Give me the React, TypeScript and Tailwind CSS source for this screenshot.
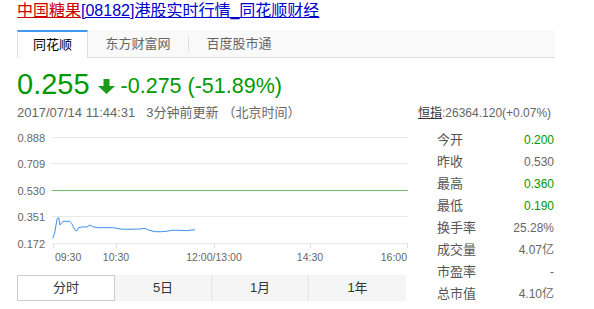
import React from "react";

const font = { fontFamily: '"Liberation Sans", Arial, "Noto Sans CJK SC", sans-serif' };

// price line, page coords (chart svg sits at left 17, top 124)
const pts: [number, number][] = [
  [52.7, 238.3], [54.7, 233], [56, 225], [57.3, 218.3], [58.7, 217.7], [60, 225], [62, 222.3],
  [64, 221], [66.7, 221.7], [69.3, 221], [71.7, 223.3], [73.3, 226.7], [75, 230], [76.7, 231],
  [78.3, 227.7], [81.7, 227], [86.7, 227], [90, 225], [92.7, 226.7], [98.3, 227.7],
  [106.7, 227.7], [113.3, 227.7], [120, 229], [126.7, 229.3], [140, 229], [145, 228.3],
  [148.3, 230], [155, 231.7], [161.7, 231.7], [168.3, 231], [171.7, 230.3], [180, 230.3],
  [186.7, 230.7], [191.7, 230], [195, 229.7],
];

const stats = [
  { k: "今开", v: "0.200", green: true },
  { k: "昨收", v: "0.530" },
  { k: "最高", v: "0.360", green: true },
  { k: "最低", v: "0.190", green: true },
  { k: "换手率", v: "25.28%" },
  { k: "成交量", v: "4.07亿" },
  { k: "市盈率", v: "-" },
  { k: "总市值", v: "4.10亿" },
];

const Chart = () => {
  const yl = [
    { t: "0.888", y: 13.5 },
    { t: "0.709", y: 39.5 },
    { t: "0.530", y: 66.5 },
    { t: "0.351", y: 92.5 },
    { t: "0.172", y: 119.5 },
  ];
  const ticks = [36, 99, 197, 293, 390];
  return (
    <svg width="393" height="146" className="block" style={font}>
      {yl.map((l, i) => (
        <g key={l.t}>
          <line
            x1="35"
            x2="391"
            y1={l.y}
            y2={l.y}
            stroke={i === 2 ? "#6dbb6d" : "#e8e8e8"}
            strokeWidth="1"
            shapeRendering="crispEdges"
          />
          <text x="28" y={l.y + 4} textAnchor="end" fontSize="11" fill="#666">
            {l.t}
          </text>
        </g>
      ))}
      {ticks.map((x) => (
        <line key={x} x1={x + 0.5} x2={x + 0.5} y1="119" y2="124" stroke="#e0e0e0" shapeRendering="crispEdges" />
      ))}
      <g fontSize="10.5" fill="#666">
        <text x="38" y="136.5">09:30</text>
        <text x="99" y="136.5" textAnchor="middle">10:30</text>
        <text x="197" y="136.5" textAnchor="middle">12:00/13:00</text>
        <text x="293" y="136.5" textAnchor="middle">14:30</text>
        <text x="390" y="136.5" textAnchor="end">16:00</text>
      </g>
      <polyline
        points={pts.map(([x, y]) => `${x - 17},${y - 124}`).join(" ")}
        fill="none"
        stroke="#3d8ff0"
        strokeWidth="1"
      />
    </svg>
  );
};

export default function App() {
  return (
    <div className="w-[594px] h-[309px] bg-white overflow-hidden pl-[17px] pt-[2px]" style={font}>
      <div className="text-[16px] leading-[18px] h-[18px]">
        <a className="underline text-[#cc0000]" href="#">中国糖果</a>
        <a className="underline text-[#0000cc]" href="#">[08182]港股实时行情_同花顺财经</a>
      </div>

      <div className="mt-[10px] w-[538px] h-[28px] flex bg-[#f9f9f9] border-b border-[#dcdcdc] text-[13px]">
        <div className="w-[71px] h-[28px] bg-white border-t-2 border-t-[#3d99f5] border-l border-r border-[#dcdcdc] flex items-center justify-center text-black">
          同花顺
        </div>
        <div className="w-[100px] flex items-center justify-center text-[#666]">东方财富网</div>
        <div className="w-px h-[15px] self-center bg-[#dddddd]"></div>
        <div className="w-[100px] flex items-center justify-center text-[#666]">百度股市通</div>
      </div>

      <div className="mt-[12px] flex items-end h-[29px] text-[#009900]">
        <span className="text-[29px] leading-[29px]">0.255</span>
        <svg width="17" height="15" viewBox="0 0 17 15" className="ml-[8px] mb-[5px]">
          <path d="M5.5 0h6v7h5.5L8.5 15 0 7h5.5z" fill="#1a9b1a" />
        </svg>
        <span className="ml-[6px] text-[21.5px] leading-[24px] mb-[1px]">-0.275 (-51.89%)</span>
      </div>

      <div className="mt-[5px] flex">
        <div className="w-[391px]">
          <div className="h-[18px] leading-[18px] text-[13px] text-[#666] flex">
            <span>2017/07/14 11:44:31</span>
            <span className="ml-[11px]">3分钟前更新</span>
            <span className="ml-[4px]">（北京时间）</span>
          </div>
          <div className="mt-[2px]">
            <Chart />
          </div>
          <div className="mt-[5px] flex h-[26px] text-[13px] text-[#333]">
            <div className="w-[98px] bg-white border border-[#cccccc] flex items-center justify-center">分时</div>
            <div className="w-[97px] bg-[#f5f5f5] flex items-center justify-center border-r border-[#e6e6e6]">5日</div>
            <div className="w-[97px] bg-[#f5f5f5] flex items-center justify-center border-r border-[#e6e6e6]">1月</div>
            <div className="w-[97px] bg-[#f5f5f5] flex items-center justify-center">1年</div>
          </div>
        </div>

        <div className="ml-[10px] w-[137px]">
          <div className="h-[18px] leading-[18px] text-[12px] text-[#666] whitespace-nowrap">
            <span className="underline text-[#333]">恒指</span>:26364.120(+0.07%)
          </div>
          <div className="mt-[7px]">
            {stats.map((s) => (
              <div key={s.k} className="h-[22px] flex items-center pl-[19px] pr-[1px]">
                <span className="text-[13px] text-[#555]">{s.k}</span>
                <span className={`ml-auto text-[12px] ${s.green ? "text-[#009900]" : "text-[#666]"}`}>{s.v}</span>
              </div>
            ))}
          </div>
        </div>
      </div>
    </div>
  );
}
